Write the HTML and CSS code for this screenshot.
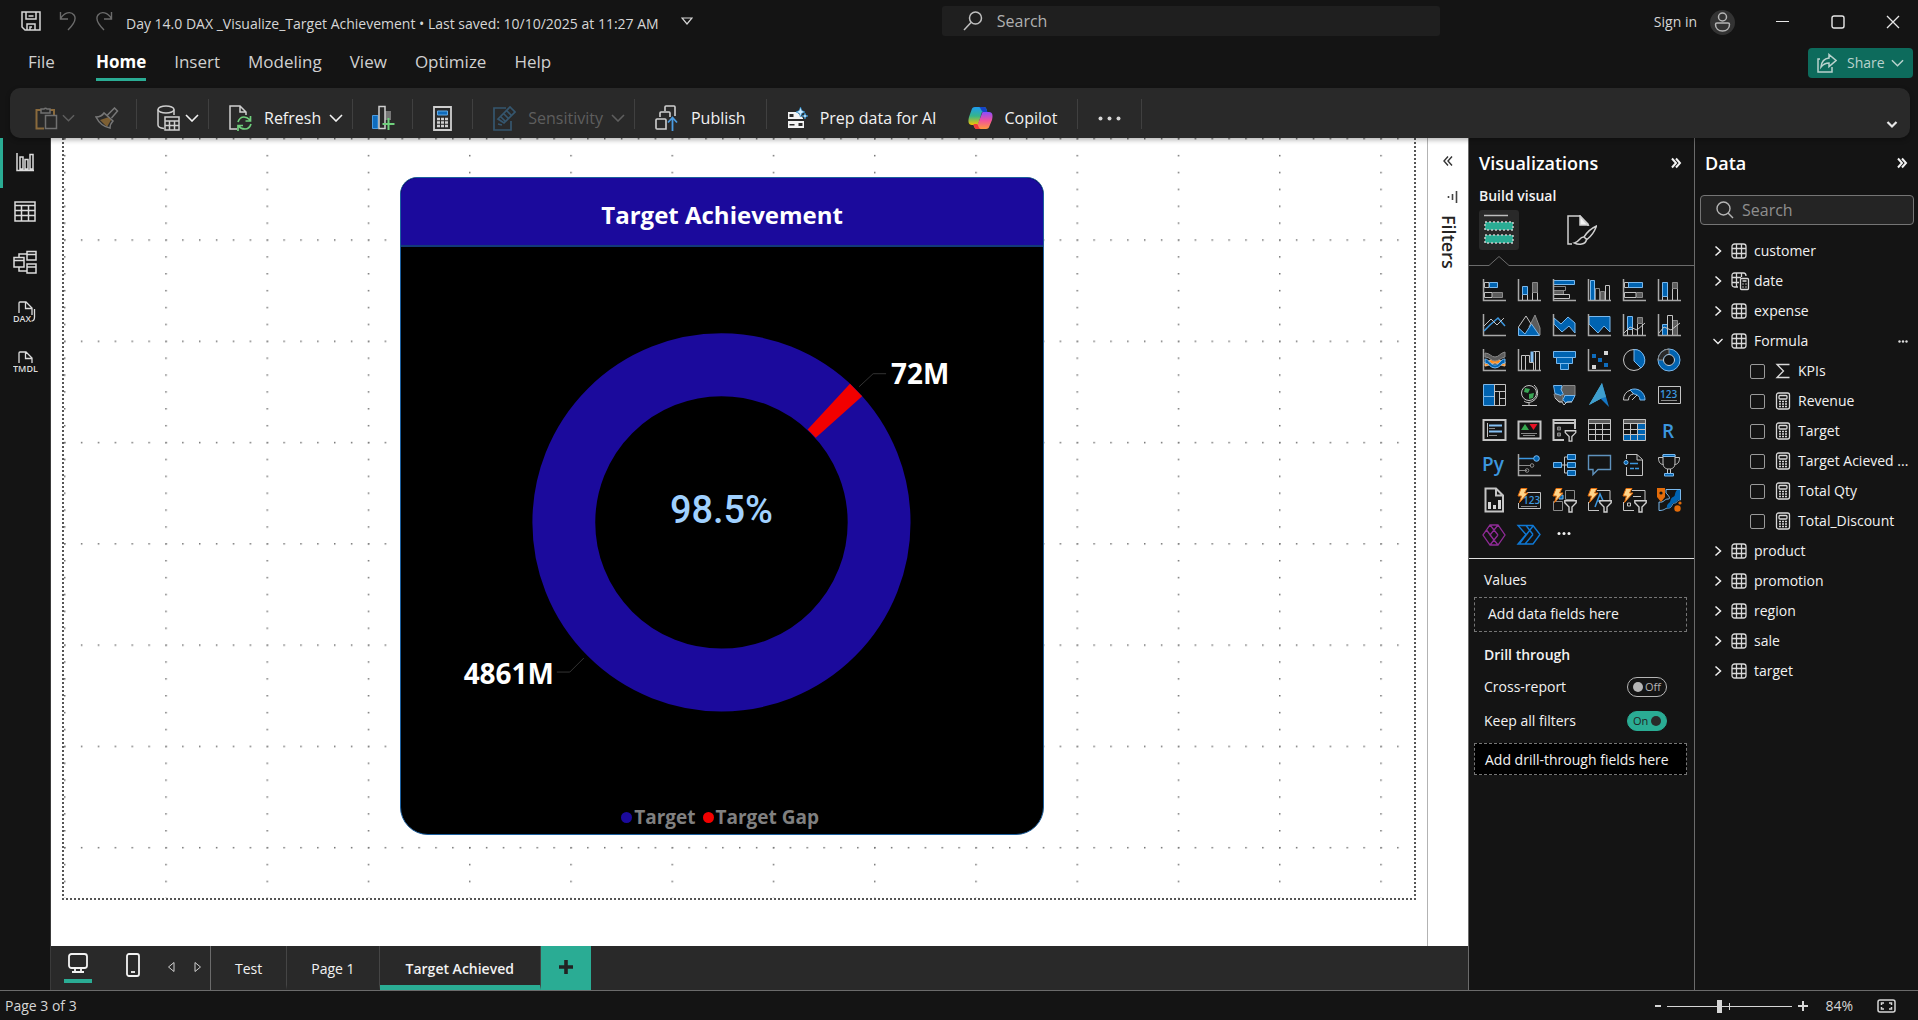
FILE: index.html
```html
<!DOCTYPE html>
<html lang="en">
<head>
<meta charset="utf-8">
<meta name="viewport" content="width=device-width, initial-scale=1">
<title>Day 14.0 DAX _Visualize_Target Achievement</title>
<link rel="stylesheet" href="styles.css">
</head>
<body>
<svg class="defs" aria-hidden="true">
  <symbol id="chev-down" viewBox="0 0 14 8"><path d="M1 1l6 6 6-6" fill="none" stroke="currentColor" stroke-width="1.6"/></symbol>
  <symbol id="dbl-right" viewBox="0 0 12 12"><path d="M2 1.500l4 4.500-4 4.500M6 1.500l4 4.500-4 4.500" fill="none" stroke="currentColor" stroke-width="2"/></symbol>
  <symbol id="tbl" viewBox="0 0 16 16"><rect x="1" y="1" width="14" height="14" rx="2.500"/><path d="M5.500 1v14M10.500 1v14M1 5.500h14M1 10.500h14"/></symbol>
  <symbol id="calc" viewBox="0 0 16 18"><rect x="1.500" y="1" width="13" height="16" rx="2"/><rect x="4" y="3.500" width="8" height="3.500" rx="1"/><path d="M4 9.500h2M7 9.500h2M10 9.500h2M4 12h2M7 12h2M10 12h2M4 14.500h2M7 14.500h2M10 14.500h2" stroke-width="1.600"/></symbol>
  <symbol id="chev-right" viewBox="0 0 10 12"><path d="M2.500 1.500L7.500 6l-5 4.500" fill="none" stroke="currentColor" stroke-width="1.500"/></symbol>
  <symbol id="bolt" viewBox="0 0 12 15"><path d="M4 .5h6L7.500 5H11L2.500 14.500 4.500 8H1z" fill="#ffd58a" stroke="#e36c0a"/></symbol>
  <symbol id="funnel" viewBox="0 0 13 13"><path d="M.8.800h11.400v2L8 7v5H5V7L.800 2.800z" fill="#141414" stroke="#d0d0d0" stroke-width="1.400"/></symbol>
</svg>

<header class="titlebar">
  <div class="doc">
    <button class="ib save" aria-label="Save"><svg width="20" height="20" viewBox="0 0 20 20" fill="none" stroke="#d6d6d6" stroke-width="1.500"><path d="M1 1h18v18H4l-3-3zM5 1v7h10V1M7.500 5h5M6 19v-6h8v6M9 19v-3h2"/></svg></button>
    <button class="ib undo" aria-label="Undo"><svg width="18" height="20" viewBox="0 0 18 20" fill="none" stroke="#6b6b6b" stroke-width="1.400"><path d="M1.500 1v7H9M1.500 8C5 1 12 0 15 4c3 4 0 9-6 15"/></svg></button>
    <button class="ib redo" aria-label="Redo"><svg width="18" height="20" viewBox="0 0 18 20" fill="none" stroke="#6b6b6b" stroke-width="1.400"><path d="M16.500 1v7H9M16.500 8C13 1 6 0 3 4c-3 4 0 9 6 15"/></svg></button>
    <h1>Day 14.0 DAX _Visualize_Target Achievement • Last saved: 10/10/2025 at 11:27 AM</h1>
    <button class="ib" aria-label="File details"><svg width="12" height="8" viewBox="0 0 12 8" fill="none" stroke="#d6d6d6" stroke-width="1.200"><path d="M1 1h10L6 7z"/></svg></button>
  </div>
  <label class="topsearch">
    <svg width="20" height="20" viewBox="0 0 20 20" fill="none" stroke="#c0c0c0" stroke-width="1.500"><circle cx="12.500" cy="7" r="6"/><path d="M8 11.500L1 19"/></svg>
    <input type="text" placeholder="Search" aria-label="Search">
  </label>
  <div class="window">
    <a href="#signin">Sign in</a>
    <svg class="avatar" width="25" height="25" viewBox="0 0 25 25"><circle cx="12.500" cy="12.500" r="12.500" fill="#333"/><g fill="none" stroke="#b5b5b5" stroke-width="1.500"><circle cx="12.500" cy="7" r="4"/><path d="M7 13h11a1.500 1.500 0 0 1 1.500 1.500c0 4-3 6.500-7 6.500s-7-2.500-7-6.500A1.500 1.500 0 0 1 7 13z"/></g></svg>
    <button class="ib win" aria-label="Minimize"><svg width="14" height="14" viewBox="0 0 14 14"><path d="M0 6.500h13" stroke="#e8e8e8"/></svg></button>
    <button class="ib win" aria-label="Maximize"><svg width="14" height="14" viewBox="0 0 14 14"><rect x="1" y="1" width="12" height="12" rx="2" fill="none" stroke="#e8e8e8" stroke-width="1.400"/></svg></button>
    <button class="ib win" aria-label="Close"><svg width="14" height="14" viewBox="0 0 14 14"><path d="M1 1l12 12M13 1L1 13" stroke="#e8e8e8" stroke-width="1.300"/></svg></button>
  </div>
</header>

<nav class="menu" aria-label="Ribbon tabs">
  <a class="file" href="#file">File</a>
  <a class="active" href="#home">Home</a>
  <a href="#insert">Insert</a>
  <a href="#modeling">Modeling</a>
  <a href="#view">View</a>
  <a href="#optimize">Optimize</a>
  <a href="#help">Help</a>
  <button class="share"><svg width="20" height="20" viewBox="0 0 20 20" fill="none" stroke="#b9d2cd" stroke-width="1.500"><path d="M3 6H1v13h14v-5M12 1.500l7 6-7 6V10c-4 0-6 1.500-8 4 .5-5 3-8.500 8-9z"/></svg>Share<svg width="13" height="8"><use href="#chev-down"/></svg></button>
</nav>

<div class="ribbon" role="toolbar" aria-label="Home">
  <div class="group first">
    <button class="tool dim" aria-label="Paste"><svg width="23" height="24" viewBox="0 0 23 24" fill="none"><path d="M6 4H1.500v18.500H9M15 4h4v5" stroke="#8a6a3c" stroke-width="2"/><path d="M6 7V3h3a2 2 0 0 1 3 0h3v4zM10.500 9.500h11v13h-11z" stroke="#707070" stroke-width="1.500" fill="#292929"/></svg><svg class="c" width="13" height="8"><use href="#chev-down"/></svg></button>
    <button class="tool" aria-label="Format painter"><svg width="24" height="22" viewBox="0 0 24 22" fill="none"><path d="M5 13l7 7 4-7-2-3z" fill="#7d5f33"/><path d="M1 10c4 0 6-1 8-4l9 8c-2 2-3 4-3 7-6-1-11-5-14-11zM12.500 8l7-7 3 3-6 7" stroke="#777" stroke-width="1.500"/></svg></button>
  </div>
  <div class="group drop">
    <button class="tool" aria-label="Get data"><svg width="23" height="26" viewBox="0 0 23 26" fill="none" stroke="#cfcfcf" stroke-width="1.500"><ellipse cx="9" cy="4.500" rx="8" ry="3.500"/><path d="M1 4.500V20c0 2 2 3 6 3.500M17 4.500V10M8 12h14v13H8zM8 16h14M12.500 16v9M17.500 16v9M8 20.500h14"/></svg><svg class="c2" width="14" height="8"><use href="#chev-down"/></svg></button>
  </div>
  <div class="group drop">
    <button class="tool"><svg width="23" height="26" viewBox="0 0 23 26" fill="none"><path d="M8 24H1V1h10l6 6v3M11 1v6h6" stroke="#cfcfcf" stroke-width="1.500"/><path d="M9 17c1-3 3-5 6-5s5 2 6 3M21.500 11v5h-5M22 19c-1 3-3 5-6 5s-5-1-6-3M9 26v-5.500h5" stroke="#6fcf7c" stroke-width="1.700"/></svg><span>Refresh</span><svg class="c" width="14" height="8"><use href="#chev-down"/></svg></button>
  </div>
  <div class="group snug">
    <button class="tool" aria-label="New visual"><svg width="24" height="26" viewBox="0 0 24 26" fill="none"><path d="M1.500 10.500H7V23.500H1.500z" fill="#0f6cbd" stroke="#4a9be0"/><path d="M14 6h6v9h-6z" fill="#777"/><path d="M8 1.500h6v22H8z" stroke="#cfcfcf" stroke-width="1.500"/><path d="M17.500 13v12M11.500 19h12" stroke="#6fcf7c" stroke-width="2"/></svg></button>
  </div>
  <div class="group">
    <button class="tool" aria-label="New measure"><svg width="19" height="25" viewBox="0 0 19 25" fill="none"><path d="M1 1h17v23H1z" stroke="#cfcfcf" stroke-width="1.800"/><path d="M4.500 5h10v4h-10z" fill="#0f6cbd" stroke="#5fa8e6"/><path d="M4 13h3M8 13h3M12 13h3M4 16.500h3M8 16.500h3M12 16.500h3M4 20h3M8 20h3M12 20h3" stroke="#cfcfcf" stroke-width="2.400"/></svg></button>
  </div>
  <div class="group drop">
    <button class="tool dim"><svg width="23" height="26" viewBox="0 0 23 26" fill="none" stroke="#35566e" stroke-width="1.700"><path d="M13 3H1v22h17v-9M5 14L17 2l5 5-11 11zM5 19l4 1M8 12l4 4M11 9l4 4M14 6l4 4"/></svg><span>Sensitivity</span><svg class="c" width="14" height="8"><use href="#chev-down"/></svg></button>
  </div>
  <div class="group">
    <button class="tool"><svg width="24" height="26" viewBox="0 0 24 26" fill="none" stroke="#cfcfcf" stroke-width="1.600"><path d="M10 6V2q0-1 1-1h8q1 0 1 1v9M5 12V8q0-1 1-1h8q1 0 1 1v4M11 24H2q-1 0-1-1v-8q0-1 1-1h8q1 0 1 1z"/><path d="M17.500 26V13M13 17.500l4.500-5 4.500 5" stroke="#4a9be0" stroke-width="1.800"/></svg><span>Publish</span></button>
  </div>
  <div class="group wide">
    <button class="tool"><svg width="21" height="22" viewBox="0 0 21 22"><path d="M1 5h9l6 6v1H1zM1 14h16v7H1z" fill="#f2f2f2"/><path d="M2.500 7h4v3h-4zM11.500 16h4v3h-4zM2.500 17h5v1.500h-5z" fill="#292929"/><path d="M13.500 0l1.300 3.500L18 5l-3.200 1.300L13.500 10l-1.300-3.700L9 5l3.200-1.500zM18 6l.8 2.200L21 9l-2.200.8L18 12l-.8-2.200L15 9l2.200-.8z" fill="#cdeaff" stroke="#1f8fd6" stroke-width=".6"/></svg><span>Prep data for AI</span></button>
    <button class="tool"><svg width="25" height="24" viewBox="0 0 25 24"><defs><linearGradient id="ga" x1="0" y1="0" x2="0" y2="1"><stop offset="0" stop-color="#1e9bf0"/><stop offset=".5" stop-color="#35b58a"/><stop offset="1" stop-color="#f5c400"/></linearGradient><linearGradient id="gb" x1="0" y1="0" x2="0" y2="1"><stop offset="0" stop-color="#8a4dff"/><stop offset=".5" stop-color="#f0529c"/><stop offset="1" stop-color="#ff9a3c"/></linearGradient></defs><path d="M7 1h9c2 0 2.500 2 3 4l-5 1-4 13H4c-4 0-4-4-3-8L3.500 4C4 2 5 1 7 1z" fill="url(#ga)"/><path d="M11 1h5c2 0 2.500 2 3.500 5h-4c-2 0-3-5-4.500-5z" fill="#1645c8"/><path d="M18 23H9c-2 0-3-2-3.500-4h4l5-13H21c4 0 4 4 3 8l-2.500 6c-.5 2-1.500 3-3.500 3z" fill="url(#gb)"/><path d="M5.500 18H9c1 0 1.500 5 4 5H9c-2 0-3-2-3.500-5z" fill="#f03a3a"/></svg><span>Copilot</span></button>
  </div>
  <div class="group">
    <button class="tool" aria-label="More options"><svg width="23" height="5" viewBox="0 0 23 5" fill="#d6d6d6"><circle cx="2.500" cy="2.500" r="2"/><circle cx="11.500" cy="2.500" r="2"/><circle cx="20.500" cy="2.500" r="2"/></svg></button>
  </div>
  <button class="ib collapse" aria-label="Collapse ribbon"><svg width="12" height="8" viewBox="0 0 12 8"><path d="M1.500 1L6 5.500 10.500 1" fill="none" stroke="#e8e8e8" stroke-width="2.200"/></svg></button>
</div>

<main class="work">
  <nav class="rail" aria-label="Views">
    <button class="active" aria-label="Report view"><svg width="24" height="24" viewBox="0 0 24 24" fill="none" stroke="#dcdcdc" stroke-width="1.500"><path d="M3 3v17.500h17M6 19V7h3v12zM11 19V9.500h3V19zM16 19V4.500h3V19z"/></svg></button>
    <button aria-label="Table view"><svg width="24" height="24" viewBox="0 0 24 24" fill="none" stroke="#dcdcdc" stroke-width="1.500"><path d="M2 2h20v19H2zM2 5.500h20M2 10.500h20M2 15.500h20M8.500 6v15M15.500 6v15"/></svg></button>
    <button aria-label="Model view"><svg width="24" height="24" viewBox="0 0 24 24" fill="none" stroke="#dcdcdc" stroke-width="1.500"><path d="M1 7.500h10V17H1zM1 10.500h10M14 1.500h9V10h-9zM14 4.500h9M14 14h9v9h-9zM14 17h9M6 7V4h8M6 17v4h8"/></svg></button>
    <button aria-label="DAX query view"><svg width="26" height="24" viewBox="0 0 26 24" fill="none" stroke="#dcdcdc" stroke-width="1.300"><path d="M6 13V3q0-1 1-1h6l6 6v7M12.500 2v6.500H19M21.500 9v8q0 4-3 4"/><text x="0" y="22" class="tiny">DAX</text></svg></button>
    <button aria-label="TMDL view"><svg width="26" height="24" viewBox="0 0 26 24" fill="none" stroke="#dcdcdc" stroke-width="1.300"><path d="M6 13V3q0-1 1-1h6l6 6v5M12.500 2v6.500H19"/><text x="0" y="22" class="tiny">TMDL</text></svg></button>
  </nav>

  <section class="stage" aria-label="Report canvas">
    <div class="upper">
      <div class="canvas">
        <div class="page">
          <svg class="grid" viewBox="0 0 1280 720" preserveAspectRatio="none" aria-hidden="true">
            <defs><pattern id="dots" width="96" height="96" patternUnits="userSpaceOnUse"><path d="M0 .7h96" stroke="#6e6e6e" stroke-width="1.400" stroke-dasharray="1.400 14.600"/><path d="M.7 0v96" stroke="#6e6e6e" stroke-width="1.400" stroke-dasharray="1.400 14.600"/></pattern></defs>
            <rect width="1280" height="720" fill="url(#dots)"/>
          </svg>
          <article class="card">
            <h2>Target Achievement</h2>
            <svg class="donut" viewBox="1 -1 641 555" role="img" aria-label="Donut chart of target and target gap">
              <circle cx="321" cy="275" r="158" fill="none" stroke="#1b0a9c" stroke-width="63"/>
              <path d="M449.800 136.100L462 148.500 415.500 190.200 407.400 181.900z" fill="#f20000"/>
              <g fill="none" stroke="#333"><path d="M459 139l14-13h13M156 425h13l14-14"/></g>
              <text x="491" y="136" class="val">72M</text>
              <text x="153" y="437" class="val end">4861M</text>
              <text x="321" y="276" class="pct">98.5%</text>
            </svg>
            <ul class="legend"><li class="t">Target</li><li class="g">Target Gap</li></ul>
          </article>
        </div>
      </div>
      <aside class="filters" aria-label="Filters pane">
        <button class="ib" aria-label="Expand filters"><svg width="10" height="10" viewBox="0 0 10 10" fill="none" stroke="#333" stroke-width="1.400"><path d="M5 .5L1 5l4 4.500M9 .5L5 5l4 4.500"/></svg></button>
        <svg class="bars" width="11" height="13" viewBox="0 0 11 13"><path d="M1.500 5v2M5.500 3v6M9.500 0v12" stroke="#444" stroke-width="1.600"/></svg>
        <h2>Filters</h2>
      </aside>
    </div>
    <div class="tabs">
      <div class="modes">
        <button class="desk" aria-label="Desktop layout"><svg width="20" height="20" viewBox="0 0 20 20" fill="none" stroke="#f2f2f2" stroke-width="1.800"><rect x="1" y="1" width="18" height="14" rx="2.500"/><path d="M7 15v3.500M13 15v3.500M4 19h12"/></svg></button>
        <button class="phone" aria-label="Mobile layout"><svg width="14" height="24" viewBox="0 0 14 24" fill="none" stroke="#f2f2f2" stroke-width="1.800"><rect x="1" y="1" width="12" height="22" rx="2"/><path d="M5 19h4"/></svg></button>
        <button class="arr" aria-label="Previous page"><svg width="8" height="12" viewBox="0 0 8 12" fill="none" stroke="#cfcfcf"><path d="M7 1.500v9L1.500 6z"/></svg></button>
        <button class="arr" aria-label="Next page"><svg width="8" height="12" viewBox="0 0 8 12" fill="none" stroke="#cfcfcf"><path d="M1 1.500v9L6.500 6z"/></svg></button>
      </div>
      <button class="tab">Test</button>
      <button class="tab">Page 1</button>
      <button class="tab active">Target Achieved</button>
      <button class="add" aria-label="New page"><svg width="14" height="14" viewBox="0 0 14 14"><path d="M7 0v14M0 7h14" stroke="#222" stroke-width="3.600"/></svg></button>
    </div>
  </section>

  <aside class="viz" aria-label="Visualizations">
    <div class="panehead"><h2>Visualizations</h2><button class="ib" aria-label="Collapse"><svg width="12" height="12"><use href="#dbl-right"/></svg></button></div>
    <h3 class="build">Build visual</h3>
    <div class="modeTabs">
      <button class="on" aria-label="Build visual"><svg width="30" height="32" viewBox="0 0 30 32"><path d="M0 1.500h24" stroke="#bdbdbd" stroke-width="1.500"/><path d="M1 8h28v8H1zM1 21h28v8H1z" fill="#2aac94" stroke="#c9c9c9" stroke-width="1.500" stroke-dasharray="2 2"/></svg></button>
      <button aria-label="Format visual"><svg width="30" height="30" viewBox="0 0 30 30" fill="none" stroke="#cfcfcf" stroke-width="1.500"><path d="M5 29H1V1h12l8 8v2"/><path d="M13 1v9h8z" fill="#f2f2f2"/><path d="M29.500 11C25 13 20 17 17 22l3 2.500c4-3 7.500-8 9.500-13.500zM16.500 22c-4 0-4 5-9 6 4 2 11 2 12-3.500"/></svg></button>
    </div>
    <svg class="caret" width="100%" height="10" aria-hidden="true"><path d="M0 9.500H20l10-9 10 9H400" fill="none" stroke="#6b6b6b"/></svg>
    <div class="gallery">
      <button aria-label="Stacked bar chart"><svg viewBox="0 0 24 24"><path class="w" d="M2.500 4.500H7v5H2.500zM2.500 14.500H10v5H2.500z"/><path class="b" d="M7.500 4.500h8v5h-8z"/><path class="g" d="M10.500 14.500h10v5h-10z"/><path class="ax" d="M1.500 1v21.500H24"/></svg></button>
      <button aria-label="Stacked column chart"><svg viewBox="0 0 24 24"><path class="w" d="M5.500 16.500h5v6h-5zM15.500 14.500h5v8h-5z"/><path class="b" d="M5.500 8.500h5v8h-5z"/><path class="g" d="M15.500 4.500h5v10h-5z"/><path class="ax" d="M1.500 1v21.500H24"/></svg></button>
      <button aria-label="Clustered bar chart"><svg viewBox="0 0 24 24"><path class="g" d="M1.500 12.500h10v4h-10z"/><path class="gl" d="M1.500 8.500h12v4h-12z"/><path class="w" d="M1.500 16.500h16v4h-16z"/><path class="b" d="M1.500 2.500h21v4h-21z"/><path class="ax" d="M1.500 1v21.500H24"/></svg></button>
      <button aria-label="Clustered column chart"><svg viewBox="0 0 24 24"><path class="b" d="M3.500 2.500h4v20h-4z"/><path class="gl" d="M8.500 10.500h4v12h-4z"/><path class="g" d="M13.500 13.500h4v9h-4z"/><path class="w" d="M18.500 7.500h4v15h-4z"/><path class="ax" d="M1.500 1v21.500H24"/></svg></button>
      <button aria-label="100% stacked bar chart"><svg viewBox="0 0 24 24"><path class="w" d="M2.500 4.500H7v5H2.500zM2.500 14.500H14v5H2.500z"/><path class="b" d="M6.500 4.500h14v5h-14z"/><path class="g" d="M14.500 14.500h6v5h-6z"/><path class="ax" d="M1.500 1v21.500H24"/></svg></button>
      <button aria-label="100% stacked column chart"><svg viewBox="0 0 24 24"><path class="w" d="M5.500 17.500h5v5h-5zM15.500 10.500h5v12h-5z"/><path class="b" d="M5.500 4.500h5v14h-5z"/><path class="g" d="M15.500 4.500h5v6h-5z"/><path class="ax" d="M1.500 1v21.500H24"/></svg></button>

      <button aria-label="Line chart"><svg viewBox="0 0 24 24"><path class="ax" d="M1.500 1v21.500H24"/><path class="bl" d="M2 18l6-6 8-7 7 8"/><path class="w" d="M2 13l7-7 6 6 7-7"/></svg></button>
      <button aria-label="Area chart"><svg viewBox="0 0 24 24"><path class="g" d="M12 14l6-12 5 13v7z"/><path class="w" d="M1.500 18V14L9 3l5 8"/><path class="b" d="M1.500 22.500V15L8 21l6.500-10 8 11.500z"/></svg></button>
      <button aria-label="Stacked area chart"><svg viewBox="0 0 24 24"><path class="b" d="M2 5l7 6 7-7 7 6v10l-6-7-7 6-8-8z"/><path class="ax" d="M1.500 1v21.500H24"/></svg></button>
      <button aria-label="100% stacked area chart"><svg viewBox="0 0 24 24"><path class="b" d="M2 3.500h21V19l-6-6-6 7-9-9z"/><path class="ax" d="M1.500 1v21.500H24"/></svg></button>
      <button aria-label="Line and stacked column chart"><svg viewBox="0 0 24 24"><path class="b" d="M5.500 3.500h5v13h-5z"/><path class="g" d="M15.500 4.500h5v6h-5z"/><path class="w" d="M5.500 16v6M10.500 16v6M15.500 11v11M20.500 11v11M2 20l6-6 7 3 8-7"/><path class="ax" d="M1.500 1v21.500H24"/></svg></button>
      <button aria-label="Line and clustered column chart"><svg viewBox="0 0 24 24"><path class="b" d="M5.500 11.500h5v11h-5z"/><path class="g" d="M15.500 7.500h5v15h-5z"/><path class="w" d="M10.500 22V2.500h5V22M2 20l5-6 7 3 9-7"/><path class="ax" d="M1.500 1v21.500H24"/></svg></button>

      <button aria-label="Ribbon chart"><svg viewBox="0 0 24 24"><path d="M3 14c3 0 5-3 10-3s6 3 10 3v4c-4 0-6-3-10-3s-6 3-10 3z" fill="#ff8c1a" stroke="#ffc487"/><path d="M3 5c5 0 6 4 10 4s5-4 10-5v5c-5 1-6 4-10 4S8 9 3 9z" class="g"/><path d="M3 11c4 0 5 6 10 6s5-6 10-6v4c-4 0-5 5-10 5S7 15 3 15z" class="b"/><path class="ax" d="M1.500 1v21.500H24"/></svg></button>
      <button aria-label="Waterfall chart"><svg viewBox="0 0 24 24"><path class="w" d="M4.500 22V7.500h4V22M8.500 7.500h4v7h4V22M16.500 3.500h6V22M18.500 4v18"/><path d="M13.500 14V3.500h3V14z" fill="#85c1f5"/><path class="ax" d="M1.500 1v21.500H24"/></svg></button>
      <button aria-label="Funnel chart"><svg viewBox="0 0 24 24"><path class="b" d="M1.500 3.500h22v6h-22zM4.500 9.500h16v6h-16zM8.500 15.500h8v6h-8z"/></svg></button>
      <button aria-label="Scatter chart"><svg viewBox="0 0 24 24"><path d="M17 3h4v4h-4zM5 17h4v4H5z" fill="#d6d6d6"/><path d="M5 6h4v4H5zM11 10h4v4h-4zM17 15h4v4h-4z" fill="#0f6cbd"/><path class="ax" d="M1.500 1v21.500H24"/></svg></button>
      <button aria-label="Pie chart"><svg viewBox="0 0 24 24"><circle class="w" cx="12" cy="12" r="10.500"/><path class="b" d="M12 1.500A10.500 10.500 0 0 1 19 20l-7-7z"/></svg></button>
      <button aria-label="Donut chart"><svg viewBox="0 0 24 24"><circle cx="12" cy="12" r="8.500" fill="none" stroke="#0063b1" stroke-width="5"/><path d="M12 3.500A8.500 8.500 0 0 0 3.500 12" fill="none" stroke="#2a2a2a" stroke-width="5"/><circle cx="12" cy="12" r="11" fill="none" stroke="#7ab8ec"/><circle cx="12" cy="12" r="5.500" fill="none" stroke="#b8d8f2"/><path class="gl" d="M1 12A11 11 0 0 1 12 1v5.500M1 12h5"/></svg></button>

      <button aria-label="Treemap"><svg viewBox="0 0 24 24"><path class="b" d="M1.500 1.500h11v12h-11zM1.500 13.500h11v9h-11z"/><path class="w" d="M12.500 1.500h11v21h-11zM12.500 8.500h11M17.500 8.500v14M17.500 15.500h6"/></svg></button>
      <button aria-label="Map"><svg viewBox="0 0 24 24"><circle class="w" cx="12" cy="10" r="7.500"/><path d="M8 5l5 1-2 4-4-1zM12 11l5-1-1 5-4 1z" fill="#3aa655"/><path class="w" d="M17 2c5 4 5 13-1 16-3 2-7 2-9 0M12 19v3.500M5 22.500h15"/></svg></button>
      <button aria-label="Filled map"><svg viewBox="0 0 24 24"><path class="g" d="M11 2.500h12v10H12l-3-5zM2 11h9v7l-3 1-5-4z"/><path class="b" d="M1.500 2.500H10l-1 4 2 4-2 2-6-2zM13 12.500h10l-3 6-7 1-2-3z"/><path class="w" d="M3 15l4 4h3l2 3 3-3h5"/></svg></button>
      <button aria-label="Azure map"><svg viewBox="0 0 24 24"><path d="M15 0L2 22l13-7z" fill="#5bc0e6"/><path d="M15 0l7 24-8-8z" fill="#1577c4"/><path d="M15 0l4 14-4 1L2 22z" fill="#3f9fce"/></svg></button>
      <button aria-label="Gauge"><svg viewBox="0 0 24 24"><path class="w" d="M1.500 17a10.500 10.500 0 0 1 7-10l3 4a6 6 0 0 0-5 6z"/><path class="b" d="M8 7a10.500 10.500 0 0 1 15 10h-5a6 6 0 0 0-6-6z"/><path class="w" d="M10 17l5-5"/></svg></button>
      <button aria-label="Card"><svg viewBox="0 0 24 24"><path class="w" d="M1.500 3.500h22v17h-22z"/><text x="3" y="15" class="num">123</text><path class="gl" d="M4 17.500h16"/></svg></button>

      <button aria-label="Multi-row card"><svg viewBox="0 0 24 24"><path class="w2" d="M1.500 2h22v20h-22z"/><path class="w" d="M5.500 5v14"/><path d="M7 7.500h13M7 13.500h13" stroke="#85c1f5" stroke-width="2"/><path class="gl" d="M7 10.500h6M7 17.500h8"/></svg></button>
      <button aria-label="KPI"><svg viewBox="0 0 24 24"><path class="w2" d="M1.500 3.500h22v17h-22z"/><path d="M4 12l4-6 4 6z" fill="#37a84f"/><path d="M12.500 6h8l-4 6z" fill="#e81123"/><path class="gl" d="M4 15.500h16M6 17.500h12"/></svg></button>
      <button aria-label="Slicer"><svg viewBox="0 0 24 24"><path class="w2" d="M23 11V2H1.500v20H12M1.500 5h22"/><path class="g" d="M5.500 9h3v3h-3zM5.500 15h3v3h-3z"/><use href="#funnel" x="12" y="12" width="13" height="12"/></svg></button>
      <button aria-label="Table"><svg viewBox="0 0 24 24"><path class="g" d="M1.500 1.500h22v4h-22z"/><path class="w" d="M1.500 1.500h22v21h-22zM1.500 5.500h22M1.500 11.500h22M1.500 16.500h22M8.500 6v16M15.500 6v16"/></svg></button>
      <button aria-label="Matrix"><svg viewBox="0 0 24 24"><path class="g" d="M1.500 1.500h22v4h-22z"/><path d="M16 6h7v16H2v-5h14z" fill="#0063b1"/><path class="w" d="M1.500 1.500h22v21h-22zM1.500 5.500h22M1.500 11.500h22M1.500 16.500h22M8.500 6v16M15.500 6v16"/></svg></button>
      <button aria-label="R script visual"><svg viewBox="0 0 24 24"><text x="5" y="20" class="rp">R</text></svg></button>

      <button aria-label="Python visual"><svg viewBox="0 0 24 24"><text x="0" y="18" class="rp">Py</text></svg></button>
      <button aria-label="Key influencers"><svg viewBox="0 0 24 24"><path class="gl" d="M2 12.500h12M2 17.500h8"/><path class="bl" d="M2 5.500h15"/><circle class="b" cx="19.500" cy="5.500" r="2.800"/><circle class="gl" cx="15" cy="12.500" r="1.800"/><circle class="gl" cx="10" cy="17.500" r="1.800"/><path class="ax" d="M1.500 1v21.500H24"/></svg></button>
      <button aria-label="Decomposition tree"><svg viewBox="0 0 24 24"><path class="w" d="M9 12h7M12.500 4v16M12.500 4H16M12.500 20H16"/><path class="b" d="M1.500 9.500h8v5h-8zM15.500 1.500h8v5h-8zM15.500 9.500h8v5h-8zM15.500 17.500h8v5h-8z"/></svg></button>
      <button aria-label="Q&amp;A"><svg viewBox="0 0 24 24"><path d="M1.500 2.500h22v14H11l-5 5v-5H1.500z" fill="none" stroke="#5f92bd" stroke-width="1.400"/></svg></button>
      <button aria-label="Smart narrative"><svg viewBox="0 0 24 24"><path class="w" d="M4.500 6V1.500H15l5.500 5V22.500h-16V14M15 2v5h5"/><circle class="b" cx="4" cy="9.500" r="2"/><path class="bl" d="M8 10.500h8M8 15.500h4M13 15.500h4"/></svg></button>
      <button aria-label="Goals"><svg viewBox="0 0 24 24"><path class="w" d="M6 2h12v8c0 4-2 6-6 6s-6-2-6-6zM6 4.500H1.500c0 5 2 7 5 7M18 4.500h4.500c0 5-2 7-5 7M10.500 16v4M13.500 16v4"/><path class="b" d="M6 1.500h12v2H6zM7.500 20.500h9v2.500h-9z"/></svg></button>

      <button aria-label="Paginated report"><svg viewBox="0 0 24 24"><path class="w2" d="M3.500.500H14l7 7V23.500H3.500zM14 .5v7h7"/><path d="M6 14h3v7H6zM11 17h3v4h-3zM16 12h3v9h-3z" fill="#d6d6d6"/></svg></button>
      <button aria-label="New card"><svg viewBox="0 0 24 24"><path class="w" d="M10 4.500h13.500v16h-22V15"/><text x="6" y="16" class="num">123</text><path class="gl" d="M4 18.500h16"/><use href="#bolt" x="0" y="0" width="12" height="15"/></svg></button>
      <button aria-label="Button slicer"><svg viewBox="0 0 24 24"><path class="gl" d="M13.500 2.500h9v9h-9zM1.500 13.500h9v9h-9z"/><path class="b" d="M7 7h4v4H7z"/><use href="#bolt" width="12" height="15"/><use href="#funnel" x="12" y="12" width="13" height="13"/></svg></button>
      <button aria-label="Text slicer"><svg viewBox="0 0 24 24"><path class="w" d="M10 2.500h13V12M1.500 14v8.500H12"/><path class="bl" d="M8 19l5-13 4 9M10 13h6"/><use href="#bolt" width="12" height="15"/><use href="#funnel" x="12" y="12" width="13" height="13"/></svg></button>
      <button aria-label="List slicer"><svg viewBox="0 0 24 24"><path class="w" d="M10 2.500h13V12M1.500 14v8.500H12M11 8.500h8M5.500 15h3v3h-3z"/><use href="#bolt" width="12" height="15"/><use href="#funnel" x="12" y="12" width="13" height="13"/></svg></button>
      <button aria-label="ArcGIS map"><svg viewBox="0 0 24 24"><path d="M9 1.500h14.500V12c-3-1-3 3-6 3s-2 5-6 5-3 2.500-9.500 2.500V14c5 1 5-3 9-3s-1-5-2-6z" fill="#141414" stroke="#7ab8ec"/><path d="M23 2v10c-3-1-3 3-6 3s-2 5-6 5c-2 0-1-4 1-5s1-5 4-6 1-4 4-7z" fill="#0063b1"/><path d="M0 0h8v9l-4 5-4-5z" fill="#e36c0a"/><circle cx="4" cy="5" r="1.600" fill="#141414"/><circle cx="20.500" cy="20.500" r="3.200" fill="#e36c0a"/><circle cx="23" cy="15" r="1.600" fill="#e36c0a"/></svg></button>

      <button aria-label="Power Apps"><svg viewBox="0 0 24 24"><path d="M8 2h8l7 10-7 10H8L1 12zM8 2l8 10M16 2L8 12l8 10M16 12L8 22M4.500 7L12 17M12 7l4 5" fill="none" stroke="#8f2b96" stroke-width="1.300"/></svg></button>
      <button aria-label="Power Automate"><svg viewBox="0 0 24 24"><path d="M1 2.500h15l7 9-7 9.500H1l8-9.500zM9 2.500l7 9M16 11.500L8 21M16 3L3 20" fill="none" stroke="#0f78d4" stroke-width="1.400"/></svg></button>
      <button aria-label="Get more visuals"><svg viewBox="0 0 24 24" fill="#f2f2f2"><circle cx="7" cy="10.500" r="1.500"/><circle cx="12" cy="10.500" r="1.500"/><circle cx="17" cy="10.500" r="1.500"/></svg></button>
    </div>
    <div class="wells">
      <h3 class="plain">Values</h3>
      <div class="well">Add data fields here</div>
      <h3 class="drill">Drill through</h3>
      <label class="opt">Cross-report<span class="switch"><input type="checkbox" role="switch"><span class="knob"></span><span>Off</span></span></label>
      <label class="opt">Keep all filters<span class="switch on"><input type="checkbox" role="switch" checked><span>On</span><span class="knob"></span></span></label>
      <div class="well dark">Add drill-through fields here</div>
    </div>
  </aside>

  <aside class="data" aria-label="Data">
    <div class="panehead"><h2>Data</h2><button class="ib" aria-label="Collapse"><svg width="12" height="12"><use href="#dbl-right"/></svg></button></div>
    <label class="find"><svg width="18" height="18" viewBox="0 0 18 18" fill="none" stroke="#b5b5b5" stroke-width="1.400"><circle cx="7.500" cy="7.500" r="6.500"/><path d="M12 12l5 5"/></svg><input type="text" placeholder="Search" aria-label="Search data"></label>
    <ul class="tree">
      <li><button class="row"><svg class="ch"><use href="#chev-right"/></svg><svg class="ti"><use href="#tbl"/></svg>customer</button></li>
      <li><button class="row"><svg class="ch"><use href="#chev-right"/></svg><svg class="ti date" viewBox="0 0 18 18"><path d="M7 15H3.500Q1 15 1 12.500v-9Q1 1 3.500 1h9Q15 1 15 4M5.500 1v14M10.500 1v4M1 5.500h9M1 10.500h7"/><rect x="9.500" y="6.500" width="8" height="11" rx="1" fill="#141414"/><path d="M11.500 9h4M11.500 12h1M14.500 12h1M11.500 15h1M14.500 15h1" stroke-width="1.600"/></svg>date</button></li>
      <li><button class="row"><svg class="ch"><use href="#chev-right"/></svg><svg class="ti"><use href="#tbl"/></svg>expense</button></li>
      <li><button class="row" aria-expanded="true"><svg class="ch" viewBox="0 0 10 12"><path d="M.5 4L5 8.500 9.500 4" fill="none" stroke="currentColor" stroke-width="1.300"/></svg><svg class="ti"><use href="#tbl"/></svg>Formula<svg class="dots" width="10" height="3" viewBox="0 0 10 3" fill="#ddd"><circle cx="1.500" cy="1.500" r="1.200"/><circle cx="5" cy="1.500" r="1.200"/><circle cx="8.500" cy="1.500" r="1.200"/></svg></button>
        <ul>
          <li><label class="leaf"><input type="checkbox"><svg class="fi" viewBox="0 0 16 18"><path d="M14.500 2.500H2l6.500 6.500L2 15.500h12.500"/></svg><span>KPIs</span></label></li>
          <li><label class="leaf"><input type="checkbox"><svg class="fi"><use href="#calc"/></svg><span>Revenue</span></label></li>
          <li><label class="leaf"><input type="checkbox"><svg class="fi"><use href="#calc"/></svg><span>Target</span></label></li>
          <li><label class="leaf"><input type="checkbox"><svg class="fi"><use href="#calc"/></svg><span>Target Acieved ...</span></label></li>
          <li><label class="leaf"><input type="checkbox"><svg class="fi"><use href="#calc"/></svg><span>Total Qty</span></label></li>
          <li><label class="leaf"><input type="checkbox"><svg class="fi"><use href="#calc"/></svg><span>Total_Discount</span></label></li>
        </ul>
      </li>
      <li><button class="row"><svg class="ch"><use href="#chev-right"/></svg><svg class="ti"><use href="#tbl"/></svg>product</button></li>
      <li><button class="row"><svg class="ch"><use href="#chev-right"/></svg><svg class="ti"><use href="#tbl"/></svg>promotion</button></li>
      <li><button class="row"><svg class="ch"><use href="#chev-right"/></svg><svg class="ti"><use href="#tbl"/></svg>region</button></li>
      <li><button class="row"><svg class="ch"><use href="#chev-right"/></svg><svg class="ti"><use href="#tbl"/></svg>sale</button></li>
      <li><button class="row"><svg class="ch"><use href="#chev-right"/></svg><svg class="ti"><use href="#tbl"/></svg>target</button></li>
    </ul>
  </aside>
</main>

<footer class="status">
  <span>Page 3 of 3</span>
  <div class="zoom">
    <button class="ib" aria-label="Zoom out"><svg width="6" height="10" viewBox="0 0 6 10"><path d="M0 5h6" stroke="#d6d6d6" stroke-width="2"/></svg></button>
    <input type="range" min="0" max="100" value="41" aria-label="Zoom">
    <button class="ib" aria-label="Zoom in"><svg width="10" height="10" viewBox="0 0 10 10"><path d="M0 5h10M5 0v10" stroke="#d6d6d6" stroke-width="2"/></svg></button>
    <output>84%</output>
    <button class="ib" aria-label="Fit to page"><svg width="19" height="14" viewBox="0 0 19 14" fill="none" stroke="#d6d6d6" stroke-width="1.500"><rect x="1" y="1" width="17" height="12" rx="2"/><path d="M7 4H4.500v2M12 4h2.500v2M7 10H4.500V8M12 10h2.500V8"/></svg></button>
  </div>
</footer>
</body>
</html>
```
FILE: styles.css
```css
* { box-sizing: border-box; }

body {
  margin: 0;
  min-height: 100vh;
  display: flex;
  flex-direction: column;
  background: #141414;
  color: #f2f2f2;
  font: 14px/20px "Open Sans", "Noto Sans", sans-serif;
}

h1, h2, h3, ul { margin: 0; padding: 0; font: inherit; }
ul { list-style: none; }
svg { display: block; flex: none; }
a { color: inherit; text-decoration: none; }
button { margin: 0; padding: 0; border: 0; background: none; color: inherit; font: inherit; }
input { font: inherit; color: inherit; }
.defs { position: absolute; width: 0; height: 0; }
.ib { display: flex; }

/* Title bar */
.titlebar {
  display: grid;
  grid-template-columns: 49.1% 26% 1fr;
  height: 44px;
}
.doc { display: flex; align-items: center; padding: 0 0 2px 21px; color: #d6d6d6; white-space: nowrap; }
.doc .undo { margin-left: 18px; }
.doc .redo { margin: 0 13px 0 18px; }
.doc h1 { margin: 5px 22px 0 0; }
.topsearch {
  display: flex;
  align-items: center;
  gap: 14px;
  height: 30px;
  margin-top: 6px;
  padding: 0 21px;
  background: #1f1f1f;
  border-radius: 3px;
}
.topsearch input, .find input { flex: 1; min-width: 0; padding: 0; border: 0; outline: 0; background: none; font-size: 16px; }
.topsearch input::placeholder { color: #b0b0b0; opacity: 1; }
.window { display: flex; align-items: center; justify-content: flex-end; padding-right: 18px; }
.window a { color: #d6d6d6; }
.avatar { margin-left: 13px; }
.win { margin-left: 41px; }

/* Ribbon tabs */
.menu { display: flex; align-items: center; gap: 28px; height: 44px; padding: 0 5px 6px 28px; color: #d0d0d0; font-size: 17px; }
.menu .file { margin-right: 13px; }
.menu a { padding: 6px 0 5px; line-height: 22px; border-bottom: 3px solid transparent; }
.menu .active { border-color: #2aac94; color: #fff; font-weight: 700; }
.share {
  display: flex;
  align-items: center;
  gap: 6px;
  width: 105px;
  height: 30px;
  margin-left: auto;
  padding-left: 9px;
  border-radius: 4px;
  background: #0d6b5c;
  color: #b9d2cd;
  font-size: 14px;
}
.share svg:first-child { margin-right: 4px; }

/* Ribbon */
.ribbon {
  position: relative;
  z-index: 1;
  display: flex;
  align-items: center;
  height: 50px;
  margin: 0 8px 0 10px;
  border-radius: 10px;
  background: #292929;
  box-shadow: 0 2px 5px rgba(0, 0, 0, .3);
  font-size: 16px;
}
.group { display: flex; align-items: center; height: 30px; margin-top: 2px; padding: 8px 20px 0; border-right: 1px solid #404040; }
.group.first { gap: 20px; padding: 8px 17px 0 25px; }
.group.drop { padding-right: 9px; }
.group.snug { padding: 8px 17px 0 18px; }
.group.wide { gap: 31px; }
.tool { display: flex; align-items: center; color: #f2f2f2; white-space: nowrap; }
.tool span { margin-left: 12px; }
.tool .c { margin-left: 8px; }
.tool .c2 { margin-left: 5px; }
.first .c { margin-left: 4px; }
.tool.dim { color: #5e5e5e; }
.collapse { align-self: flex-end; margin: 0 12px 9px auto; }

/* Work area */
.work { flex: 1; display: flex; align-items: stretch; }
.rail { flex: none; width: 51px; border-right: 1px solid #3a3a3a; }
.rail button { display: flex; align-items: center; width: 50px; height: 50px; padding: 0 0 2px 13px; border-left: 0 solid #2aac94; }
.rail .active { border-left-width: 3px; padding-left: 11px; }
.tiny { font: 600 9px "Open Sans", sans-serif; fill: #dcdcdc; stroke: none; }

.stage { flex: 1; min-width: 0; display: flex; flex-direction: column; background: #fff; }
.upper { flex: 1; display: flex; }
.canvas { flex: 1; min-width: 0; padding: 0 11px; }
.page { position: relative; aspect-ratio: 1353 / 761; border: 2px dotted #555; border-top: 0; }
.grid { width: 100%; height: 100%; }
.card {
  position: absolute;
  left: 24.9%;
  top: 5.2%;
  width: 47.7%;
  height: 86.600%;
  display: flex;
  flex-direction: column;
  overflow: hidden;
  border: 1px solid #1c5f9e;
  border-radius: 17px 17px 28px 28px;
  background: #000;
}
.card h2 { height: 70px; margin: -1px -1px 0; border-bottom: 2px solid #123a78; background: #1b0a9c; color: #fff; font-size: 24px; font-weight: 700; line-height: 76px; text-align: center; }
.donut { flex: 1 1 0; min-height: 0; width: 100%; }
.val { fill: #fff; font-size: 28px; font-weight: 700; }
.end { text-anchor: end; }
.pct { fill: #a0d1ff; font-family: Roboto, sans-serif; font-size: 38px; font-weight: 500; text-anchor: middle; }
.legend { display: flex; justify-content: center; gap: 7px; height: 33px; padding-right: 4px; color: #808080; font-size: 19px; font-weight: 700; line-height: 32px; }
.legend li { display: flex; align-items: center; gap: 2px; height: 32px; }
.legend li::before { content: ""; width: 11px; height: 11px; border-radius: 50%; background: #1b0a9c; }
.legend .g::before { background: #f20000; }

.filters { display: flex; flex-direction: column; flex: none; width: 41px; padding: 18px 0 0 11px; border-left: 1px solid #b3b3b3; color: #252423; }
.filters .ib { margin-left: 4px; }
.filters .bars { margin: 25px 0 11px 8px; }
.filters h2 { font-size: 18px; font-weight: 600; line-height: 20px; writing-mode: vertical-rl; align-self: flex-start; }

/* Page tabs */
.tabs { display: flex; height: 44px; background: #292929; }
.modes { display: flex; align-items: center; width: 160px; padding: 0 8px 0 13px; border-right: 1px solid #6b6b6b; }
.desk { display: flex; justify-content: center; width: 30px; height: 30px; border-bottom: 4px solid #2aac94; }
.phone { margin: 0 27px 6px 34px; }
.arr { margin: 0 19px 2px 0; }
.arr + .arr { margin-right: 0; }
.tab { padding: 6px 24px 0; border-right: 1px solid #454545; border-bottom: 5px solid transparent; }
.tab.active { padding: 6px 26px 0; border-bottom-color: #2aac94; font-weight: 600; }
.add { display: flex; align-items: center; justify-content: center; width: 50px; padding-bottom: 2px; background: #2aac94; }

/* Side panes */
.viz, .data { flex: none; border-left: 1px solid #6b6b6b; }
.viz { width: 226px; }
.data { width: 224px; }
.panehead { display: flex; align-items: center; justify-content: space-between; height: 50px; padding: 0 12px 0 10px; }
.data .panehead { padding-right: 10px; }
.panehead h2 { font-size: 18px; font-weight: 600; color: #fff; }
.build { padding-left: 10px; font-weight: 600; line-height: 16px; }
.modeTabs { display: flex; gap: 43px; padding: 6px 10px; }
.modeTabs button { display: flex; align-items: center; justify-content: center; width: 40px; height: 40px; border-radius: 3px; }
.modeTabs .on { background: #292929; }
.gallery { display: grid; grid-template-columns: repeat(6, 24px); gap: 11px; padding: 12px 0 11px 13px; border-bottom: 1px solid #e0e0e0; }
.gallery svg { width: 24px; height: 24px; overflow: visible; }
.w, .w2, .ax, .gl, .bl { fill: none; stroke: #c4c4c4; }
.w2 { stroke-width: 2; }
.ax { stroke-width: 1.500; stroke: #a8a8a8; }
.gl { stroke: #8a8a8a; }
.g { fill: #5c5c5c; stroke: #8a8a8a; }
.b { fill: #0063b1; stroke: #7ab8ec; }
.bl { stroke: #3c97df; stroke-width: 1.500; }
.num { font: 600 10px "Open Sans", sans-serif; fill: #3c97df; }
.rp { font: 600 19px "Open Sans", sans-serif; fill: #3c97df; }

.wells { padding: 11px 7px 0 5px; }
.wells h3 { padding: 0 10px; font-weight: 600; }
.wells h3.plain { font-weight: 400; }
.wells h3.drill { margin-bottom: 6px; }
.well { height: 35px; margin: 7px 0 13px; padding: 0 13px; border: 1px dashed #757575; line-height: 32px; white-space: nowrap; }
.well.dark { height: 32px; margin: 4px 0 0; padding: 0 10px; background: #000; }
.opt { display: flex; align-items: center; justify-content: space-between; height: 34px; padding: 0 20px 2px 10px; }
.switch { position: relative; display: flex; align-items: center; justify-content: space-between; width: 40px; height: 20px; padding: 0 5px; border: 1px solid #b5b5b5; border-radius: 10px; color: #b5b5b5; font-size: 11px; line-height: 18px; }
.switch input { position: absolute; inset: 0; margin: 0; opacity: 0; }
.knob { width: 10px; height: 10px; border-radius: 50%; background: #b5b5b5; }
.switch.on { border-color: #2aac94; background: #2aac94; color: #222; }
.switch.on .knob { background: #292929; }

.find { display: flex; align-items: center; gap: 8px; height: 30px; margin: 7px 4px 11px 5px; padding: 0 15px; border: 1px solid #757575; border-radius: 4px; background: #242424; }
.find input::placeholder { color: #8f8f8f; opacity: 1; }
.tree { color: #f2f2f2; }
.row, .leaf { display: flex; align-items: center; width: 100%; height: 30px; white-space: nowrap; }
.row { padding: 0 10px 0 18px; }
.ch { width: 10px; height: 12px; margin-right: 8px; }
.ti { width: 16px; height: 16px; margin-right: 7px; overflow: visible; }
.ti, .fi { fill: none; stroke: #d8d8d8; stroke-width: 1.300; }
.ti.date { width: 18px; height: 18px; margin-right: 5px; }
.dots { margin-left: auto; }
.leaf { padding-left: 55px; }
.leaf input { appearance: none; width: 15px; height: 15px; margin: 0 10px 0 0; border: 1px solid #9a9a9a; border-radius: 2px; }
.fi { width: 16px; height: 18px; margin-right: 7px; }

/* Status bar */
.status { display: flex; align-items: center; justify-content: space-between; height: 30px; padding: 1px 22px 0 5px; border-top: 1px solid #6b6b6b; color: #d6d6d6; }
.zoom { display: flex; align-items: center; gap: 6px; }
.zoom output { margin: 0 18px 0 11px; }
.zoom input {
  appearance: none;
  width: 125px;
  height: 13px;
  margin: 0;
  background:
    linear-gradient(#d6d6d6, #d6d6d6) 62px 50% / 1px 7px no-repeat,
    linear-gradient(#d6d6d6, #d6d6d6) 0 50% / 100% 1px no-repeat;
}
.zoom input::-webkit-slider-thumb { appearance: none; width: 5px; height: 13px; background: #d6d6d6; }
```
